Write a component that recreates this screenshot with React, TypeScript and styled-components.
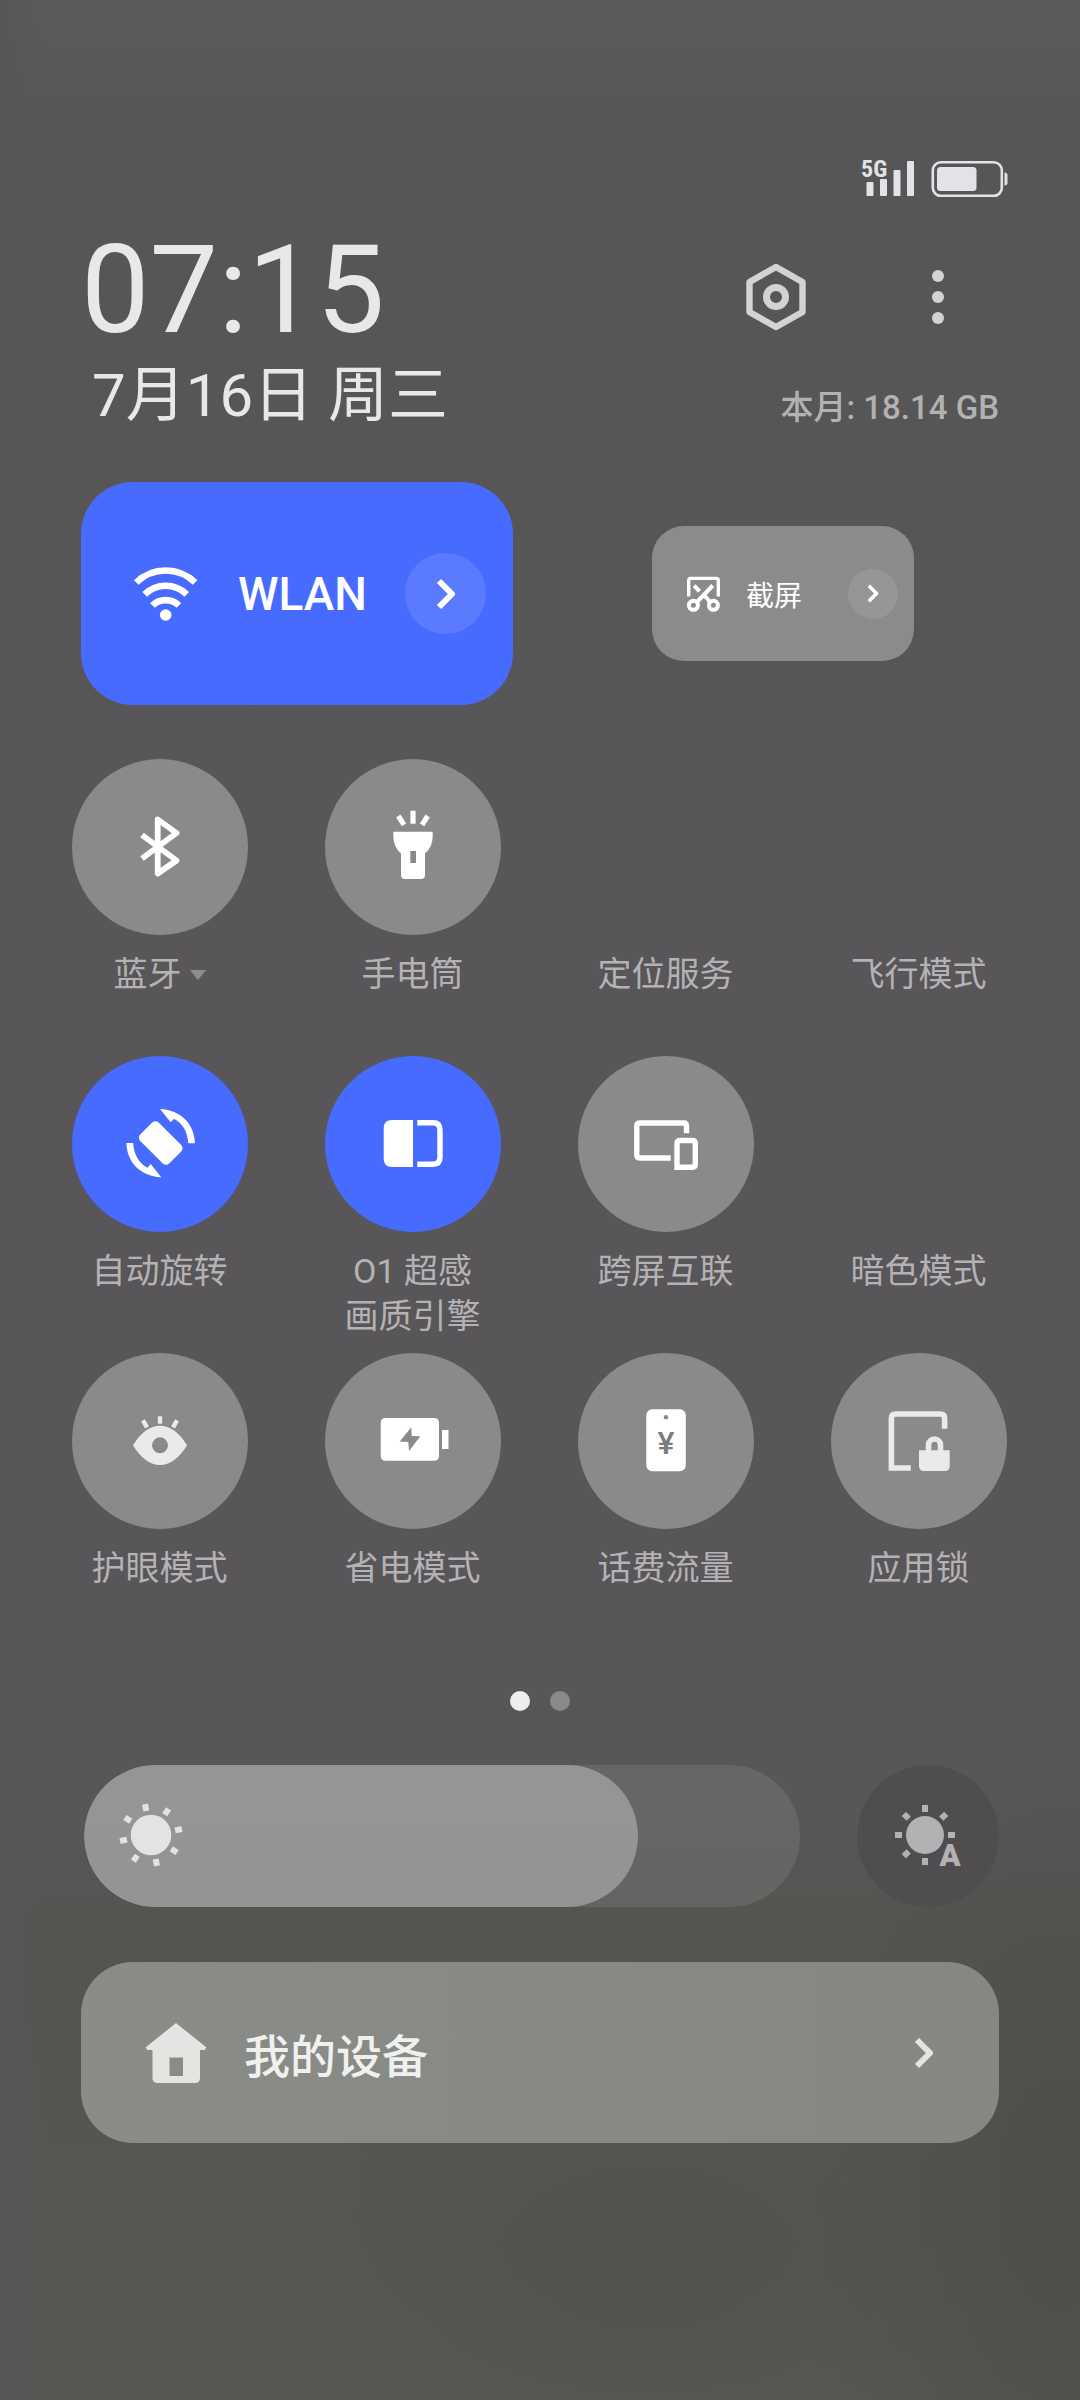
import React, { useState } from "react";
import styled, { createGlobalStyle } from "styled-components";

const GlobalStyle = createGlobalStyle`
  *, *::before, *::after { box-sizing: border-box; }
  body {
    margin: 0;
    background: #565656;
    font-family: Roboto, "Noto Sans CJK SC", sans-serif;
    color: #e8e8e8;
  }
  button {
    margin: 0;
    padding: 0;
    border: 0;
    background: none;
    color: inherit;
    font: inherit;
    cursor: pointer;
  }
  svg { display: block; flex: none; }
`;

const Panel = styled.main`
  min-height: 100vh;
  padding: 151px 0 80px;
  display: flex;
  flex-direction: column;
  background:
    radial-gradient(ellipse 260px 480px at 98% 92%, #4c4e4a 0%, transparent 100%),
    radial-gradient(ellipse 340px 200px at 60% 94%, #50524e 0%, transparent 100%),
    linear-gradient(90deg, #555755 0%, transparent 5%),
    linear-gradient(180deg, #5b5b5b 0%, #565656 5%, #565656 18%, #585658 32%, #585658 76%, #545551 80%, #535551 84%, #565854 100%);
`;

const StatusBar = styled.div`
  display: flex;
  justify-content: flex-end;
  align-items: center;
  gap: 16px;
  height: 56px;
  padding: 0 72px;
  color: #e2e3e8;
`;

const StatusText = styled.text`
  font-family: "Roboto Condensed", "Liberation Sans Narrow", Roboto, sans-serif;
  font-size: 24px;
  font-weight: 700;
`;

const Header = styled.header`
  display: flex;
  justify-content: space-between;
  margin-top: 23px;
  padding: 0 81px;
`;

const Clock = styled.div`
  display: flex;
  flex-direction: column;
  gap: 8px;
`;

const Time = styled.time`
  font-size: 122px;
  line-height: 122px;
`;

const DateLine = styled.div`
  padding-left: 11px;
  font-size: 60px;
  line-height: 72px;
`;

const HeaderSide = styled.div`
  display: flex;
  flex-direction: column;
  justify-content: space-between;
  align-items: flex-end;
  padding-top: 27px;
`;

const HeaderActions = styled.div`
  display: flex;
  gap: 82px;
  padding-right: 21px;
  color: #d3d3d3;
`;

const IconButton = styled.button`
  display: grid;
  place-items: center;
  width: 80px;
  height: 80px;
`;

const DataUsage = styled.div`
  font-size: 33px;
  line-height: 48px;
  font-weight: 500;
  color: #b2b2b2;
`;

const Cards = styled.section`
  display: grid;
  grid-template-columns: 1fr 1fr;
  align-items: center;
  justify-items: center;
  gap: 54px;
  margin-top: 50px;
  padding: 0 81px;
`;

const Card = styled.div<{ $large?: boolean }>`
  display: flex;
  align-items: center;
  width: ${(p) => (p.$large ? "100%" : "262px")};
  height: ${(p) => (p.$large ? "223px" : "135px")};
  padding-right: ${(p) => (p.$large ? "27px" : "16px")};
  border-radius: ${(p) => (p.$large ? "52px" : "32px")};
  background: ${(p) => (p.$large ? "#486bff" : "#8b8b8c")};
  color: #fff;
`;

const CardToggle = styled.button<{ $large?: boolean }>`
  flex: 1;
  align-self: stretch;
  display: flex;
  align-items: center;
  gap: ${(p) => (p.$large ? "40px" : "26px")};
  padding-left: ${(p) => (p.$large ? "53px" : "35px")};
  font-size: ${(p) => (p.$large ? "46px" : "28px")};
  font-weight: ${(p) => (p.$large ? 500 : 400)};
  white-space: nowrap;
`;

const Expand = styled.button<{ $large?: boolean }>`
  display: grid;
  place-items: center;
  width: ${(p) => (p.$large ? "81px" : "50px")};
  height: ${(p) => (p.$large ? "81px" : "50px")};
  border-radius: 50%;
  background: rgba(255, 255, 255, 0.1);
`;

const Tiles = styled.section`
  display: grid;
  grid-template-columns: repeat(4, 1fr);
  row-gap: 14px;
  margin-top: 54px;
  padding: 0 35px 0 33px;
`;

const Tile = styled.button`
  display: flex;
  flex-direction: column;
  align-items: center;
  gap: 17px;
  min-height: 283px;
`;

type TileState = "on" | "off" | "blank";
const tileColor: Record<TileState, string> = {
  on: "#486bff",
  off: "#8b898b",
  blank: "transparent",
};

const TileCircle = styled.span<{ $state: TileState }>`
  display: grid;
  place-items: center;
  width: 176px;
  height: 176px;
  border-radius: 50%;
  background: ${(p) => tileColor[p.$state]};
  color: #fff;
`;

const TileLabel = styled.span`
  display: flex;
  align-items: center;
  gap: 8px;
  font-size: 34px;
  line-height: 45px;
  white-space: pre-line;
  color: #b4b2b4;
`;

const Caret = styled.span`
  border: 8px solid transparent;
  border-top: 10px solid #8f8d8f;
  border-bottom: 0;
`;

const Pager = styled.nav`
  display: flex;
  justify-content: center;
  gap: 20px;
  margin-top: 55px;
`;

const PageDot = styled.button<{ $active?: boolean }>`
  width: 20px;
  height: 20px;
  border-radius: 50%;
  background: ${(p) => (p.$active ? "#efedef" : "#8b898b")};
`;

const BrightnessRow = styled.section`
  display: flex;
  gap: 57px;
  margin-top: 54px;
  padding: 0 81px 0 84px;
`;

const Slider = styled.label`
  position: relative;
  flex: 1;
  height: 142px;
  border-radius: 71px;
  overflow: hidden;
  background: rgba(255, 255, 255, 0.09);
`;

const SliderFill = styled.span`
  display: flex;
  align-items: center;
  height: 100%;
  padding-left: 32px;
  border-radius: 71px;
  background: rgba(255, 255, 255, 0.31);
  color: #e4e2e4;
`;

const SliderInput = styled.input`
  position: absolute;
  inset: 0;
  width: 100%;
  height: 100%;
  margin: 0;
  opacity: 0;
`;

const AutoButton = styled.button`
  display: grid;
  place-items: center;
  width: 142px;
  height: 142px;
  border-radius: 50%;
  background: #4f4d50;
  color: #b3b1b4;
`;

const AutoText = styled.text`
  font-family: Roboto, sans-serif;
  font-size: 31px;
  font-weight: 900;
`;

const YuanText = styled.text`
  font-family: Roboto, sans-serif;
  font-size: 32px;
  font-weight: 500;
`;

const Devices = styled.button`
  display: flex;
  align-items: center;
  gap: 37px;
  height: 181px;
  margin: 55px 81px 0;
  padding: 0 65px 0 64px;
  border-radius: 52px;
  background: linear-gradient(90deg, #8a8c88, #858783);
  color: #e3e5e2;
`;

const DevicesLabel = styled.span`
  flex: 1;
  text-align: left;
  font-size: 46px;
  font-weight: 500;
  color: #f0f1ef;
`;

const Chevron = ({ small }: { small?: boolean }) => (
  <svg width={small ? 12 : 20} height={small ? 19 : 32} viewBox="0 0 20 32" fill="none" stroke="currentColor" strokeWidth={6}>
    <path d="M3 3 16 16 3 29" strokeLinejoin="round" />
  </svg>
);

const SignalIcon = () => (
  <svg width="57" height="50" viewBox="-4 -6 57 50" fill="currentColor">
    <StatusText x="-1" y="17">5G</StatusText>
    <rect x="4.500" y="22" width="7" height="14" rx="1" />
    <rect x="18" y="19" width="7" height="17" rx="1" />
    <rect x="31.500" y="10" width="7" height="26" rx="1" />
    <rect x="45" y="1" width="7" height="35" rx="1" />
  </svg>
);

const BatteryIcon = () => (
  <svg width="77" height="40" viewBox="0 0 77 40">
    <rect x="1.800" y="3.300" width="69" height="33.500" rx="8" fill="none" stroke="currentColor" strokeWidth="2.600" />
    <rect x="6" y="8" width="39.500" height="24" rx="3.500" fill="currentColor" />
    <path d="M73.500 13.500q3 0 3 3v7q0 3-3 3z" fill="currentColor" />
  </svg>
);

const SettingsIcon = () => (
  <svg width="64" height="70" viewBox="0 0 64 70" fill="none" stroke="currentColor" strokeWidth="6.400" strokeLinejoin="round">
    <path d="M32 5 58.500 20V50L32 65 5.500 50V20Z" />
    <circle cx="32" cy="35" r="9.500" strokeWidth="7" />
  </svg>
);

const MoreIcon = () => (
  <svg width="12" height="54" viewBox="0 0 12 54" fill="currentColor">
    <circle cx="6" cy="6" r="6" />
    <circle cx="6" cy="27" r="6" />
    <circle cx="6" cy="48" r="6" />
  </svg>
);

const WifiIcon = () => (
  <svg width="64" height="54" viewBox="0 0 64 54" fill="none" stroke="currentColor" strokeWidth="6.600">
    <path d="M2.300 15.500A42 42 0 0 1 61.100 15.500" />
    <path d="M10.700 27.300A30 30 0 0 1 52.700 27.300" />
    <path d="M18.500 38.500A19 19 0 0 1 44.900 38.500" />
    <circle cx="31.700" cy="48" r="5.800" fill="currentColor" stroke="none" />
  </svg>
);

const ScreenshotIcon = () => (
  <svg width="33" height="36" viewBox="0 0 33 36" fill="none" stroke="currentColor" strokeWidth="3.400">
    <path d="M1.700 20.500V4.400q0-2 2-2h25.600q2 0 2 2v16.100" />
    <path d="M25.800 9.500 10 26M7.200 9.700l5.300 5.600M17.500 19.500l5.500 6.500" strokeWidth="4" />
    <circle cx="6.400" cy="29.300" r="4.500" strokeWidth="4" />
    <circle cx="26.400" cy="29.300" r="4.500" strokeWidth="4" />
  </svg>
);

const TileIcon = ({ children }: { children: React.ReactNode }) => (
  <svg width="80" height="80" viewBox="0 0 80 80" fill="currentColor" stroke="none">{children}</svg>
);

const BluetoothIcon = () => (
  <TileIcon>
    <path d="M22 28 56.500 53.500 37.700 66.500V12.500L56.500 26 22 51.500" fill="none" stroke="currentColor" strokeWidth="5.800" strokeLinejoin="round" />
  </TileIcon>
);

const FlashlightIcon = () => (
  <TileIcon>
    <path d="M20.300 24.700H59.700V29Q59.700 40 52 46.500V68q0 4-4 4H32q-4 0-4-4V46.500Q20.300 40 20.300 29ZM37.300 44V56H43V44Z" fillRule="evenodd" />
    <path d="M40 3.700V16.700M25.300 9 31 17.800M54.700 9 49 17.800" stroke="currentColor" strokeWidth="5.200" />
  </TileIcon>
);

const RotateIcon = () => {
  const arrow = "M40 5C62 6 74.500 21 75 39.300H68.300C67.500 28 63 19.500 54 14.700L50.700 18.300Z";
  return (
    <TileIcon>
      <rect x="20.200" y="26" width="41" height="26" rx="4.500" transform="rotate(45 40.700 39)" />
      <path d={arrow} />
      <path d={arrow} transform="rotate(180 40.700 39.200)" />
    </TileIcon>
  );
};

const CompareIcon = () => (
  <TileIcon>
    <path d="M40 16V63H19q-8.300 0-8.300-8.300V24.300Q10.700 16 19 16Z" />
    <path d="M44.300 18.800H60q7 0 7 7V53.200q0 7-7 7H44.300" fill="none" stroke="currentColor" strokeWidth="5.400" />
  </TileIcon>
);

const CrossScreenIcon = () => (
  <TileIcon>
    <g fill="none" stroke="currentColor" strokeWidth="5.400">
      <path d="M60.500 29.300V22q0-3-3-3H13.800q-3 0-3 3V51q0 3 3 3H44.700" />
      <path d="M51 63.300V39.500q0-3 3-3H66.300q3 0 3 3V60.300q0 3-3 3Z" />
    </g>
  </TileIcon>
);

const EyeIcon = () => (
  <TileIcon>
    <g color="#ebe9eb" fill="currentColor">
      <path d="M13 44.300Q25 24.700 40 24.700T67 44.300Q55 64 40 64T13 44.300ZM32 44.300a8 8 0 0 0 16 0a8 8 0 0 0-16 0Z" fillRule="evenodd" />
      <path d="M40 15.300V22.700M23 19.300 27 26.300M57 19.300 53 26.300" stroke="currentColor" strokeWidth="4.400" />
    </g>
  </TileIcon>
);

const PowerSaveIcon = () => (
  <TileIcon>
    <path d="M12.700 17H61q5 0 5 5V54.700q0 5-5 5H12.700q-5 0-5-5V22q0-5 5-5ZM38.300 26.300 26.700 40.500 35.300 41 36 50 47.300 35.300 38.700 35Z" fillRule="evenodd" />
    <rect x="69" y="29" width="6.500" height="19" />
  </TileIcon>
);

const BillingIcon = () => (
  <TileIcon>
    <rect x="20.300" y="8.300" width="39.500" height="62" rx="6" />
    <circle cx="40" cy="16.300" r="2.200" fill="#8b898b" />
    <YuanText x="40" y="53" textAnchor="middle" fill="#7c7a7c">¥</YuanText>
  </TileIcon>
);

const AppLockIcon = () => (
  <TileIcon>
    <g color="#ebe9eb">
      <path d="M65.600 27.700V17q0-4-4-4H16.400q-4 0-4 4V67H31.700" fill="none" stroke="currentColor" strokeWidth="5.600" />
      <path d="M40 49.300H70.700V65q0 5-5 5H45q-5 0-5-5Z" fill="currentColor" />
      <path d="M49.500 50V44a6 6 0 0 1 12 0V50" fill="none" stroke="currentColor" strokeWidth="5.600" />
    </g>
  </TileIcon>
);

const rays = (cx: number, cy: number, distance: number, angles: number[]) =>
  angles.map((a) => (
    <rect key={a} x={cx - 3} y={cy - distance - 3.5} width="6" height="7" transform={`rotate(${a} ${cx} ${cy})`} />
  ));

const SunIcon = () => (
  <svg width="70" height="70" viewBox="0 0 70 70" fill="currentColor">
    <circle cx="35" cy="34" r="20.300" />
    {rays(35, 34, 28, [-11, 34, 79, 124, 169, 214, 259, 304])}
  </svg>
);

const AutoSunIcon = () => (
  <svg width="76" height="76" viewBox="0 0 76 76" fill="currentColor">
    <circle cx="35" cy="37" r="19" />
    {rays(35, 37, 26.5, [0, 45, 90, 180, 225, 270, 315])}
    <AutoText x="60" y="68" textAnchor="middle">A</AutoText>
  </svg>
);

const HomeIcon = () => (
  <svg width="62" height="60" viewBox="0 0 62 60" fill="currentColor">
    <path d="M31 0 61.500 24.500 59.500 27H55V55q0 5-5 5H12.500q-5 0-5-5V27H2.500L.5 24.500ZM24.500 34.500V53H38V34.500Z" fillRule="evenodd" />
  </svg>
);

type TileData = { label: string; state: TileState; icon?: React.ReactNode; menu?: boolean };

const tiles: TileData[] = [
  { label: "蓝牙", state: "off", icon: <BluetoothIcon />, menu: true },
  { label: "手电筒", state: "off", icon: <FlashlightIcon /> },
  { label: "定位服务", state: "blank" },
  { label: "飞行模式", state: "blank" },
  { label: "自动旋转", state: "on", icon: <RotateIcon /> },
  { label: "O1 超感\n画质引擎", state: "on", icon: <CompareIcon /> },
  { label: "跨屏互联", state: "off", icon: <CrossScreenIcon /> },
  { label: "暗色模式", state: "blank" },
  { label: "护眼模式", state: "off", icon: <EyeIcon /> },
  { label: "省电模式", state: "off", icon: <PowerSaveIcon /> },
  { label: "话费流量", state: "off", icon: <BillingIcon /> },
  { label: "应用锁", state: "off", icon: <AppLockIcon /> },
];

export default function App() {
  const [brightness, setBrightness] = useState(774);

  return (
    <>
      <GlobalStyle />
      <Panel lang="zh-CN">
        <StatusBar>
          <SignalIcon />
          <BatteryIcon />
        </StatusBar>

        <Header>
          <Clock>
            <Time>07:15</Time>
            <DateLine>7月16日 周三</DateLine>
          </Clock>
          <HeaderSide>
            <HeaderActions>
              <IconButton aria-label="设置"><SettingsIcon /></IconButton>
              <IconButton aria-label="更多"><MoreIcon /></IconButton>
            </HeaderActions>
            <DataUsage>本月: 18.14 GB</DataUsage>
          </HeaderSide>
        </Header>

        <Cards>
          <Card $large>
            <CardToggle $large aria-pressed="true"><WifiIcon />WLAN</CardToggle>
            <Expand $large aria-label="WLAN 详情"><Chevron /></Expand>
          </Card>
          <Card>
            <CardToggle><ScreenshotIcon />截屏</CardToggle>
            <Expand aria-label="截屏选项"><Chevron small /></Expand>
          </Card>
        </Cards>

        <Tiles>
          {tiles.map((tile) => (
            <Tile key={tile.label} aria-pressed={tile.state === "on"}>
              <TileCircle $state={tile.state}>{tile.icon}</TileCircle>
              <TileLabel>
                {tile.label}
                {tile.menu && <Caret />}
              </TileLabel>
            </Tile>
          ))}
        </Tiles>

        <Pager aria-label="页面">
          <PageDot $active aria-label="第 1 页" />
          <PageDot aria-label="第 2 页" />
        </Pager>

        <BrightnessRow>
          <Slider>
            <SliderFill style={{ width: `${brightness / 10}%` }}><SunIcon /></SliderFill>
            <SliderInput
              type="range"
              min={200}
              max={1000}
              value={brightness}
              aria-label="亮度"
              onChange={(e) => setBrightness(Number(e.target.value))}
            />
          </Slider>
          <AutoButton aria-label="自动亮度"><AutoSunIcon /></AutoButton>
        </BrightnessRow>

        <Devices>
          <HomeIcon />
          <DevicesLabel>我的设备</DevicesLabel>
          <Chevron />
        </Devices>
      </Panel>
    </>
  );
}
